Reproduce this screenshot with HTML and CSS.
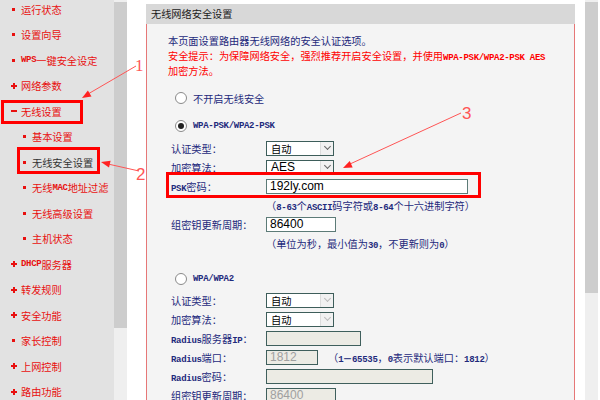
FILE: index.html
```html
<!DOCTYPE html>
<html lang="zh-CN">
<head>
    <meta charset="UTF-8">
    <title>无线网络安全设置</title>
    <link rel="stylesheet" href="styles.css">
</head>
<body>
    <!-- left menu -->
    <div class="sidebar">
        <ul class="menu">
            <li class="lv1"><span class="dot"></span>运行状态</li>
            <li class="lv1"><span class="dot"></span>设置向导</li>
            <li class="lv1"><span class="dot"></span><span class="en">WPS</span>一键安全设定</li>
            <li class="lv1"><span class="plus"></span>网络参数</li>
            <li class="lv1"><span class="minus"></span>无线设置</li>
            <li class="lv2"><span class="dot"></span>基本设置</li>
            <li class="lv2 active"><span class="dot"></span>无线安全设置</li>
            <li class="lv2"><span class="dot"></span>无线<span class="en">MAC</span>地址过滤</li>
            <li class="lv2"><span class="dot"></span>无线高级设置</li>
            <li class="lv2"><span class="dot"></span>主机状态</li>
            <li class="lv1"><span class="plus"></span><span class="en">DHCP</span>服务器</li>
            <li class="lv1"><span class="plus"></span>转发规则</li>
            <li class="lv1"><span class="plus"></span>安全功能</li>
            <li class="lv1"><span class="dot"></span>家长控制</li>
            <li class="lv1"><span class="plus"></span>上网控制</li>
            <li class="lv1"><span class="plus"></span>路由功能</li>
        </ul>
    </div>
    <div class="scroll side-scroll"><div class="thumb"></div></div>

    <!-- main panel -->
    <div class="panel">
        <div class="panel-head">无线网络安全设置</div>
        <div class="panel-body">
            <div class="intro">
                <div class="line">本页面设置路由器无线网络的安全认证选项。</div>
                <div class="line warn">安全提示：为保障网络安全，强烈推荐开启安全设置，并使用<span class="en">WPA-PSK/WPA2-PSK AES</span></div>
                <div class="line warn">加密方法。</div>
            </div>

            <div class="radio-row off-row"><span class="radio"></span>不开启无线安全</div>

            <div class="radio-row psk-row"><span class="radio on"></span><span class="en">WPA-PSK/WPA2-PSK</span></div>
            <div class="form psk-form">
                <span class="label">认证类型：</span>
                <div class="select"><span>自动</span><i></i></div>
                <span class="label">加密算法：</span>
                <div class="select"><span class="latin">AES</span><i></i></div>
                <span class="label"><span class="en">PSK</span>密码：</span>
                <div class="input w-psk">192ly.com</div>
                <span class="hint">（<span class="en">8-63</span>个<span class="en">ASCII</span>码字符或<span class="en">8-64</span>个十六进制字符）</span>
                <span class="label">组密钥更新周期：</span>
                <div class="input w-period">86400</div>
                <span class="hint">（单位为秒，最小值为<span class="en">30</span>，不更新则为<span class="en">0</span>）</span>
            </div>

            <div class="radio-row wpa-row"><span class="radio"></span><span class="en">WPA/WPA2</span></div>
            <div class="form wpa-form">
                <span class="label">认证类型：</span>
                <div class="select"><span>自动</span><i class="pale"></i></div>
                <span class="label">加密算法：</span>
                <div class="select"><span>自动</span><i class="pale"></i></div>
                <span class="label"><span class="en">Radius</span>服务器<span class="en">IP</span>：</span>
                <div class="input off w-ip"></div>
                <span class="label"><span class="en">Radius</span>端口：</span>
                <div class="inline">
                    <div class="input off w-port">1812</div>
                    <span class="port-note">（<span class="en">1－65535</span>，<span class="en">0</span>表示默认端口：<span class="en">1812</span>）</span>
                </div>
                <span class="label"><span class="en">Radius</span>密码：</span>
                <div class="input off w-pwd"></div>
                <span class="label">组密钥更新周期：</span>
                <div class="input off w-period">86400</div>
            </div>
        </div>
    </div>
    <div class="scroll right-scroll"><div class="thumb"></div></div>

    <!-- red annotations drawn over the screenshot -->
    <svg class="notes" width="600" height="400" viewBox="0 0 600 400">
        <g fill="none" stroke="#f00" stroke-width="3">
            <rect x="2.5" y="101.5" width="79" height="21"/>
            <rect x="18.5" y="148.5" width="80" height="24"/>
            <rect x="167.5" y="173.5" width="312" height="23"/>
        </g>
        <g stroke="#f55" stroke-width="1">
            <line x1="136" y1="66" x2="88" y2="94"/>
            <line x1="139" y1="171" x2="108" y2="164"/>
            <line x1="461" y1="113" x2="350" y2="164"/>
        </g>
        <g fill="#f22">
            <polygon points="82,98 91.5,96.4 87.9,90.4"/>
            <polygon points="101,162 110.6,160.7 109,167.5"/>
            <polygon points="343,168 352.7,167.4 349.7,161"/>
        </g>
        <g fill="#f55" font-family="Liberation Serif, serif" font-size="17">
            <text x="135" y="71">1</text>
            <text x="136" y="180" font-family="Liberation Sans, sans-serif">2</text>
            <text x="462" y="119" font-family="Liberation Sans, sans-serif">3</text>
        </g>
    </svg>
</body>
</html>
```

FILE: styles.css
```css
* {
    box-sizing: border-box;
}

body {
    margin: 0;
    width: 600px;
    height: 400px;
    overflow: hidden;
    display: flex;
    position: relative;
    background: #fff;
    font-family: "Noto Sans CJK SC", sans-serif;
    font-size: 10.2px;
}

.en {
    font-family: "Liberation Mono", monospace;
    font-size: 9px;
    letter-spacing: -0.3px;
    font-weight: bold;
}

/* left menu */
.sidebar {
    width: 114px;
    flex: none;
    background: #e2e2e2;
}

.menu {
    list-style: none;
    margin: -3.75px 0 0;
    padding: 0;
}

.menu li {
    height: 25.53px;
    display: flex;
    align-items: center;
    color: #e8100f;
    white-space: nowrap;
}

.menu .lv1 {
    padding-left: 10px;
}

.menu .lv2 {
    padding-left: 21px;
}

.menu .active {
    color: #333;
}

.dot,
.plus,
.minus {
    width: 7px;
    height: 7px;
    margin-right: 4px;
    flex: none;
    display: flex;
    align-items: center;
    justify-content: center;
    position: relative;
}

.dot::before {
    content: "";
    width: 3px;
    height: 3px;
    background: #e8100f;
}

.plus::before,
.minus::before {
    content: "";
    width: 6px;
    height: 2px;
    background: #e8100f;
}

.plus::after {
    content: "";
    position: absolute;
    width: 2px;
    height: 6px;
    background: #e8100f;
}

/* fake scrollbars */
.scroll {
    width: 13px;
    flex: none;
    background: #efefef;
    padding-top: 2px;
}

.scroll .thumb {
    background: #cdcdcd;
}

.side-scroll .thumb {
    height: 326px;
}

.right-scroll {
    margin-left: 10px;
}

.right-scroll .thumb {
    height: 291px;
}

/* panel */
.panel {
    width: 429px;
    flex: none;
    margin: 4px 0 0 19px;
    display: flex;
    flex-direction: column;
}

.panel-head {
    height: 20px;
    line-height: 20px;
    padding-left: 5px;
    background: #d8d8d8;
    color: #1a1a1a;
}

.panel-body {
    flex: 1;
    background: #f4f4f4;
    border-left: 1px solid #e67777;
    border-right: 1px solid #e67777;
    padding: 8.5px 0 0 21px;
    color: #1e2a7c;
}

.intro .line {
    height: 15px;
    line-height: 15px;
    white-space: nowrap;
}

.warn {
    color: #f00;
}

.radio-row {
    height: 14px;
    padding-left: 7px;
    display: flex;
    align-items: center;
}

.off-row {
    margin-top: 13.5px;
}

.psk-row {
    margin-top: 14px;
}

.wpa-row {
    margin-top: 19.5px;
}

.radio {
    width: 12px;
    height: 12px;
    margin-right: 6px;
    border: 1px solid #8a8a8a;
    border-radius: 50%;
    background: #fff;
    display: flex;
    align-items: center;
    justify-content: center;
}

.radio.on::before {
    content: "";
    width: 6px;
    height: 6px;
    border-radius: 50%;
    background: #222;
}

/* forms */
.form {
    display: grid;
    grid-template-columns: 95px 1fr;
    grid-auto-rows: 19px;
    align-items: center;
    padding-left: 3px;
}

.psk-form {
    margin-top: 5.5px;
}

.wpa-form {
    margin-top: 4.5px;
}

.label {
    white-space: nowrap;
}

.hint {
    grid-column: 2;
    white-space: nowrap;
}

.select {
    width: 68px;
    height: 15px;
    border: 1px solid #3d5d5a;
    background: #fff;
    color: #000;
    display: flex;
    align-items: center;
}

.select span {
    flex: 1;
    padding-left: 4px;
}

.select .latin {
    font-family: "Liberation Sans", Arial, sans-serif;
    font-size: 12px;
}

.select i {
    width: 13px;
    height: 13px;
    background: #f1f1f1;
    border-left: 1px solid #dcdcdc;
    display: flex;
    align-items: center;
    justify-content: center;
}

.select i::after {
    content: "";
    width: 4px;
    height: 4px;
    margin-top: -3px;
    border-right: 1px solid #666;
    border-bottom: 1px solid #666;
    transform: rotate(45deg);
}

.select i.pale::after {
    border-color: #bbb;
}

.input {
    height: 15px;
    border: 1px solid #5c7b77;
    background: #fff;
    color: #000;
    padding-left: 3px;
    font-family: "Liberation Sans", Arial, sans-serif;
    font-size: 12px;
    display: flex;
    align-items: center;
}

.input.off {
    background: #ecebe4;
    border-color: #3f5f5c;
    color: #a0a0a0;
}

.w-psk {
    width: 202px;
}

.w-period {
    width: 70px;
}

.w-ip {
    width: 95px;
}

.w-port {
    width: 52px;
}

.w-pwd {
    width: 167px;
}

.inline {
    display: flex;
    align-items: center;
}

.port-note {
    margin-left: 10px;
    white-space: nowrap;
}

.notes {
    position: absolute;
    left: 0;
    top: 0;
    pointer-events: none;
}
```
